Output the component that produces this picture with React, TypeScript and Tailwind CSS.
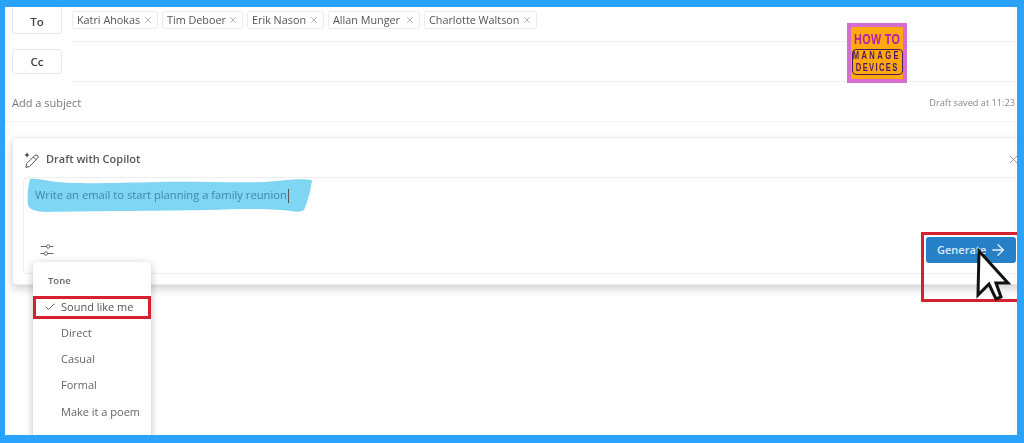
import { ArrowRight, Check, X } from "lucide-react";

const chips = [
  { name: "Katri Ahokas", w: "w-[86px]" },
  { name: "Tim Deboer", w: "w-[81px]" },
  { name: "Erik Nason", w: "w-[77px]" },
  { name: "Allan Munger", w: "w-[92px]" },
  { name: "Charlotte Waltson", w: "w-[113px]" },
];

const tones = ["Direct", "Casual", "Formal", "Make it a poem"];

function Logo() {
  return (
    <div className="absolute left-[842px] top-[16px] flex h-[60px] w-[60px] flex-col items-center border-[4px] border-[#d56dcf] bg-[#ffa90f] font-['Liberation_Sans',sans-serif]">
      <div className="mt-[5px] scale-x-[0.72] whitespace-nowrap text-[15px] font-bold leading-[14px] tracking-[0.5px] text-[#b31cb8]">HOW TO</div>
      <div className="mt-[3px] flex h-[26px] w-[51px] flex-col items-center justify-center rounded-[4px] border border-[#4a1a5c] text-[#4a1570]">
        <div className="scale-x-[0.76] whitespace-nowrap text-[10px] font-bold leading-[12px] tracking-[3.2px]">MANAGE</div>
        <div className="scale-x-[0.76] whitespace-nowrap text-[10px] font-bold leading-[12px] tracking-[1.8px]">DEVICES</div>
      </div>
    </div>
  );
}

function WandIcon() {
  return (
    <svg width="16" height="18" viewBox="0 0 16 18" fill="none" stroke="#555" strokeWidth="1" className="shrink-0">
      <path d="M2 16.5 L2.6 12.6 L10.6 4.6 Q12 3.4 13.6 4.6 Q14.8 6 13.4 7.4 L5.6 15.4 Z" />
      <path d="M9.4 6 L12.2 8.8" />
      <path d="M3 1 L3.7 3.2 L5.8 4 L3.7 4.8 L3 7 L2.3 4.8 L0.2 4 L2.3 3.2 Z" fill="#333" stroke="none" />
    </svg>
  );
}

function SlidersIcon() {
  return (
    <svg width="14" height="14" viewBox="0 0 14 14" fill="none" stroke="#666" strokeWidth="1">
      <path d="M0.5 3.5 H6.5 M10 3.5 H13.5" />
      <circle cx="8.2" cy="3.5" r="1.7" />
      <path d="M0.5 10.5 H4 M7.5 10.5 H13.5" />
      <circle cx="5.8" cy="10.5" r="1.7" />
    </svg>
  );
}

function Swash() {
  return (
    <svg width="290" height="36" viewBox="0 0 290 36" className="absolute left-[3px] top-[0px]">
      <path
        d="M3 1 C 8 0, 16 2, 30 4 C 50 6, 90 5, 130 4 C 180 3, 220 6, 250 3 C 265 1, 278 1, 285 2 C 284 12, 281 22, 277 32 C 274 34, 270 34, 264 33 C 240 30, 210 31, 180 32 C 130 33, 60 33, 20 34 C 8 34, 2 31, 1 27 C 0 18, 1 8, 3 1 Z"
        fill="#7fd6f3"
      />
    </svg>
  );
}

function Cursor() {
  return (
    <svg width="40" height="56" viewBox="-3 -3 40 56" className="absolute left-[971px] top-[241px]">
      <path d="M0 0 L-1 44 L10 33 L17 48 L22 46 L17 32 L29 32 Z" fill="#fff" stroke="#111" strokeWidth="3" strokeLinejoin="miter" />
    </svg>
  );
}

export default function App() {
  return (
    <div className="relative h-[443px] w-[1024px] overflow-hidden border-b-[8px] border-l-[5px] border-r-[7px] border-t-[7px] border-[#29a3fb] bg-white font-['Open_Sans','Noto_Sans',sans-serif] text-[#555]">
      <div className="blur-[0.4px]">
        <div className="flex h-[35px]">
          <button className="ml-[7px] h-[27px] w-[50px] rounded-b-[3px] border border-t-0 border-[#e8e8e8] pt-[3px] text-[11.5px] font-semibold text-[#444]">To</button>
          <div className="ml-[10px] flex flex-1 gap-[4px] border-b border-[#efefef] pt-[4px]">
            {chips.map((c) => (
              <div key={c.name} className={`flex h-[18px] items-center justify-between rounded-[3px] border border-[#ececec] pl-[4px] pr-[3px] text-[10.8px] text-[#555] ${c.w}`}>
                <span className="whitespace-nowrap">{c.name}</span>
                <X size={10} strokeWidth={1.2} className="mr-[1px] shrink-0 text-[#666]" />
              </div>
            ))}
          </div>
        </div>
        <div className="flex h-[40px]">
          <button className="ml-[7px] mt-[7px] h-[25px] w-[50px] rounded-[3px] border border-[#e8e8e8] pt-[1px] text-[11.5px] font-semibold text-[#444]">Cc</button>
          <div className="ml-[10px] flex-1 border-b border-[#efefef]" />
        </div>
        <div className="flex h-[40px] items-center justify-between border-b border-[#f1f1f1] pl-[7px] pr-[2px]">
          <span className="pt-[4px] text-[11px] text-[#777]">Add a subject</span>
          <span className="pt-[3px] text-[9.2px] text-[#888]">Draft saved at 11:23</span>
        </div>
        <div className="ml-[7px] mt-[15px] h-[148px] w-[1020px] rounded-[4px] border border-[#ebebeb] bg-white shadow-[0_4px_10px_rgba(0,0,0,0.18)]">
          <div className="flex h-[39px] items-center pl-[11px] pr-[11px] pt-[4px]">
            <WandIcon />
            <span className="ml-[6px] flex-1 text-[11px] font-semibold text-[#555]">Draft with Copilot</span>
            <X size={13} strokeWidth={1.1} className="text-[#666]" />
          </div>
          <div className="relative ml-[10px] flex h-[97px] w-[1009px] flex-col justify-between rounded-[4px] border border-[#eeeeee]">
            <Swash />
            <div className="relative ml-[11px] mt-[8px] text-[11.2px] leading-[18px] text-[#3f87a6]">
              Write an email to start planning a family reunion<span className="ml-[1px] inline-block h-[14px] w-px bg-[#555] align-middle" />
            </div>
            <div className="flex items-end justify-between pl-[16px] pr-[15px]">
              <div className="mb-[16px]"><SlidersIcon /></div>
              <button className="mb-[10px] flex h-[26px] w-[90px] items-center justify-between rounded-[3px] bg-[#2680c8] pl-[11px] pr-[9px] text-[11px] font-semibold text-[#d8ecfa]">
                Generate
                <ArrowRight size={18} strokeWidth={1.7} className="text-[#e3f1fb]" />
              </button>
            </div>
          </div>
        </div>
        <div className="absolute left-[28px] top-[255px] w-[118px] rounded-[4px] bg-white pt-[10px] shadow-[0_2px_8px_rgba(0,0,0,0.25)]">
          <div className="pb-[4px] pl-[15px] text-[9.5px] font-semibold leading-[18px] text-[#666]">Tone</div>
          <div className="flex h-[26px] items-center pl-[11px] text-[11px] text-[#555]">
            <Check size={12} strokeWidth={1.7} className="mr-[5px] text-[#444]" />
            Sound like me
          </div>
          {tones.map((t) => (
            <div key={t} className="flex h-[26.3px] items-center pl-[28px] text-[11px] text-[#666]">{t}</div>
          ))}
          <div className="h-[40px]" />
        </div>
        <Logo />
      </div>
      <div className="absolute left-[28px] top-[289px] h-[23px] w-[118px] border-[3px] border-[#d5202e]" />
      <div className="absolute left-[916px] top-[225px] h-[70px] w-[96px] border-[3px] border-r-0 border-[#d5202e]" />
      <Cursor />
    </div>
  );
}
